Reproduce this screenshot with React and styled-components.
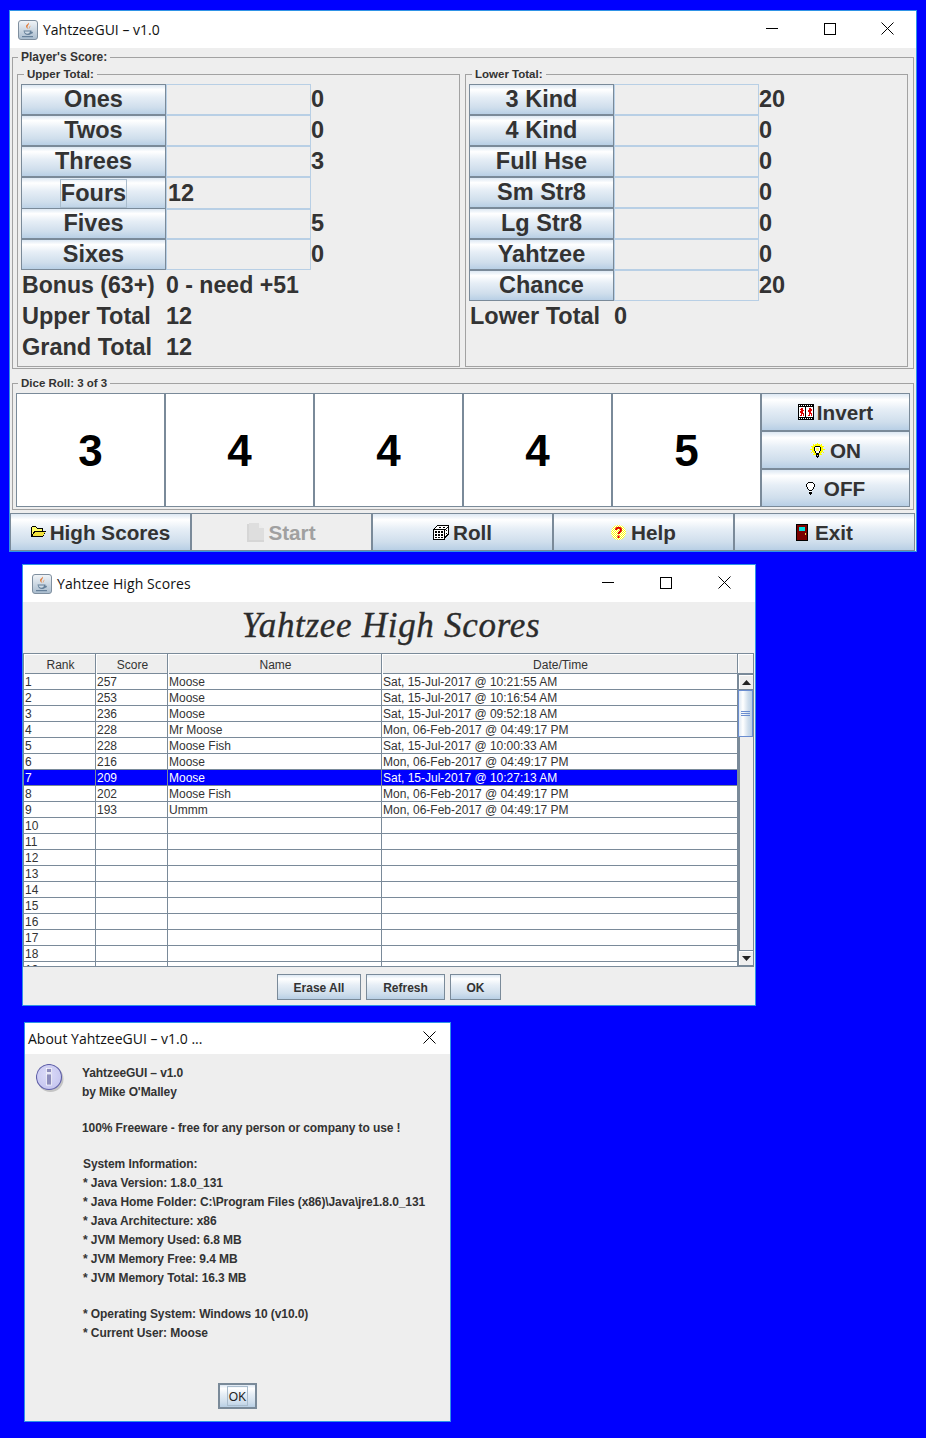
import React from "react";
import styled, { createGlobalStyle } from "styled-components";

const Global = createGlobalStyle`
  html, body { margin: 0; padding: 0; background: #0000ff; }
  body { width: 926px; height: 1438px; overflow: hidden; font-family: "Liberation Sans", Arial, sans-serif; color: #333; }
  #root { position: relative; width: 926px; height: 1438px; }
  * { box-sizing: border-box; }
`;

const metal = "linear-gradient(180deg,#dde8f3 0%,#ffffff 16%,#e6eef6 42%,#cfdeec 78%,#b8cfe5 100%)";
const line = "#7a8a99";

/* ---------- window chrome ---------- */
const Win = styled.section`
  position: absolute;
  left: ${p => p.$x}px; top: ${p => p.$y}px; width: ${p => p.$w}px; height: ${p => p.$h}px;
  border: 1px solid #2f93e6;
  background: #eeeeee;
  display: flex; flex-direction: column;
`;
const TitleBar = styled.header`
  height: ${p => p.$h || 37}px; flex: none; background: #fff;
  display: flex; align-items: center; padding-left: ${p => p.$pad}px; padding-right: ${p => p.$padR || 0}px;
  font-family: "Open Sans", "Noto Sans", sans-serif; color: #111;
`;
const TitleText = styled.span`
  font-size: ${p => p.$size}px; margin-left: ${p => p.$gap || 0}px; margin-bottom: ${p => p.$lift || 0}px; flex: 1; white-space: nowrap;
  letter-spacing: ${p => p.$ls || 0}px;
`;
const Ctl = styled.span`
  width: ${p => p.$w || 58}px; height: 100%; padding-bottom: 2px; display: flex; align-items: center; justify-content: center;
`;
const IconSvg = styled.svg`
  flex: none; display: block;
`;

const JavaIcon = () => (
  <IconSvg width="20" height="20" viewBox="0 0 20 20">
    <defs><linearGradient id="jg" x1="0" y1="0" x2="0" y2="1"><stop offset="0" stopColor="#f2f5f8"/><stop offset="1" stopColor="#a8bbcd"/></linearGradient></defs>
    <rect x=".5" y=".5" width="19" height="19" rx="2.5" fill="url(#jg)" stroke="#7f8f9f"/>
    <path d="M10.5 2.5c1.5 2-1.8 3-.9 5.2.3.7.9 1 1.2 1.3-2.6-.8-3.4-2.6-2.2-3.9 1-1.1 2-1.5 1.9-2.6z" fill="#e2712a"/>
    <path d="M12.5 5.5c.3 1.200-1.400 1.700-.8 3.200-1.500-1.300.3-2.200.8-3.200z" fill="#e98a46"/>
    <path d="M5 10.500h8.500c0 .5 0 .8-.2 1.300h1c1 0 1 2-1.500 2.200-.6.700-1.300 1-2.800 1-2.600 0-4-1.500-4.500-4.500z" fill="#66809a"/>
    <path d="M6.500 11.500h5.500c-.4 1.500-1.200 2.200-2.800 2.200-1.400 0-2.200-.8-2.700-2.200z" fill="#cfdbe6"/>
    <rect x="4" y="16" width="11" height="1.200" fill="#66809a"/>
  </IconSvg>
);
const MinIcon = () => <IconSvg width="12" height="13" viewBox="0 0 12 13"><path d="M0 6.500h12" stroke="#000"/></IconSvg>;
const MaxIcon = () => <IconSvg width="12" height="12" viewBox="0 0 12 12"><rect x=".5" y=".5" width="11" height="11" fill="none" stroke="#000"/></IconSvg>;
const CloseIcon = () => <IconSvg width="13" height="13" viewBox="0 0 13 13"><path d="M.5.5l12 12M12.500.5l-12 12" stroke="#000" strokeWidth="1"/></IconSvg>;

const FilmIcon = () => (
  <IconSvg width="16" height="16" viewBox="0 0 16 16" shapeRendering="crispEdges">
    <rect width="16" height="16" fill="#000"/>
    <rect y="3" width="16" height="10" fill="#fff"/>
    <path d="M1 1h1v1H1zM3 1h1v1H3zM5 1h1v1H5zM7 1h1v1H7zM9 1h1v1H9zM11 1h1v1h-1zM13 1h1v1h-1zM1 14h1v1H1zM3 14h1v1H3zM5 14h1v1H5zM7 14h1v1H7zM9 14h1v1H9zM11 14h1v1h-1zM13 14h1v1h-1z" fill="#fff"/>
    <rect x="0" y="3" width="1" height="10" fill="#000"/>
    <rect x="7" y="3" width="1" height="10" fill="#000"/>
    <rect x="15" y="3" width="1" height="10" fill="#000"/>
    <path d="M3 4h2v2h1v1H5v2h1v3H5V10H4v2H2v-1h1V9H2V7h1V6H2V5h1z" fill="#e00000"/>
    <path d="M11 4h2v1h1v2h-1v2h1v3h-1v-2h-1v2h-2v-1h1V8h-1V6h1z" fill="#e00000"/>
  </IconSvg>
);
const BulbOn = () => (
  <IconSvg width="15" height="15" viewBox="0 0 15 15" shapeRendering="crispEdges">
    <path d="M7 0h1v2H7zM3 1h1v1H3zM11 1h1v1h-1zM0 6h2v1H0zM13 6h2v1h-2zM1 3h1v1H1zM13 3h1v1h-1zM1 9h1v1H1zM13 9h1v1h-1zM3 11h1v1H3zM11 11h1v1h-1z" fill="#ffff00"/>
    <path d="M5 1h5v1h2v1h1v6h-1v1h-1v2H4v-2H3V9H2V3h1V2h2z" fill="#ffff00"/>
    <path d="M5 3h5v1h1v4h-1v2H9v1H6v-1H5V8H4V4h1z" fill="#000"/>
    <path d="M5 4h5v4H9v2H6V8H5z" fill="#fff"/>
    <path d="M6 5h3v3H6z" fill="#ffff66"/>
    <path d="M6 11h3v3H8v1H7v-1H6z" fill="#000"/><path d="M7 12h1v1H7z" fill="#ccc"/>
  </IconSvg>
);
const BulbOff = () => (
  <IconSvg width="9" height="13" viewBox="0 0 9 13" shapeRendering="crispEdges">
    <path d="M2 0h5v1h1v1h1v3H8v2H7v1H6v4H5v1H4v-1H3V8H2V7H1V5H0V2h1V1h1z" fill="#000"/>
    <path d="M2 1h5v1h1v3H7v2H6v1H3V7H2V5H1V2h1z" fill="#fff"/>
    <path d="M3 9h3v1H3z" fill="#fff"/>
  </IconSvg>
);
const FolderIcon = () => (
  <IconSvg width="15" height="12" viewBox="0 0 15 12" shapeRendering="crispEdges">
    <path d="M1 0h4v1h1v1h6v3h3v1h-1v2h-1v2h-1v1H0V1h1z" fill="#000"/>
    <path d="M1 1h4v1h1v1h5v2H3v1H2v2H1z" fill="#ffff66"/>
    <path d="M4 6h10v1h-1v2h-1v1H2V8h1V7h1z" fill="#f2e23c"/>
  </IconSvg>
);
const DocIcon = () => (
  <IconSvg width="17" height="19" viewBox="0 0 17 19" shapeRendering="crispEdges">
    <path d="M0 1h12v1h2v2h2v2h1v13H0z" fill="#d6d6d6"/>
    <path d="M2 0h10v5h5v12H2z" fill="#dedede"/>
    <path d="M12 1h1v1h1v1h1v1h1v1h-4z" fill="#ececec"/>
  </IconSvg>
);
const DiceIcon = () => (
  <IconSvg width="16" height="15" viewBox="0 0 16 15" shapeRendering="crispEdges">
    <path d="M4 0h12v10h-1v1h-1v1h-1v1h-1v2H0V4h1V3h1V2h1V1h1z" fill="#000"/>
    <path d="M4 1h11v1h-1v1h-1v1H2V3h1V2h1zM1 5h10v9H1z" fill="#fff"/>
    <path d="M12 5h1V4h1V3h1v6h-1v1h-1v1h-1z" fill="#fff"/>
    <path d="M2 6h2v2H2zM5 6h2v2H5zM8 6h2v2H8zM2 9h2v2H2zM5 9h2v2H5zM8 9h2v2H8zM2 12h2v1H2zM5 12h2v1H5zM8 12h2v1H8zM6 2h2v1H6zM10 2h2v1h-2z" fill="#000"/>
    <path d="M13 5h1v1h-1zM13 8h1v1h-1z" fill="#000"/>
  </IconSvg>
);
const HelpIcon = () => (
  <IconSvg width="15" height="15" viewBox="0 0 15 15">
    <defs><pattern id="dith" width="2" height="2" patternUnits="userSpaceOnUse"><rect width="2" height="2" fill="#ffffff"/><rect width="1" height="1" fill="#ffff00"/><rect x="1" y="1" width="1" height="1" fill="#ffff00"/></pattern></defs>
    <circle cx="7.500" cy="7.500" r="7.500" fill="url(#dith)"/>
    <path d="M5 5c0-3 5-3 5 0 0 2-2.500 2-2.500 4" fill="none" stroke="#e00000" strokeWidth="2"/>
    <rect x="6.500" y="10.500" width="2" height="2.500" fill="#e00000"/>
  </IconSvg>
);
const DoorIcon = () => (
  <IconSvg width="12" height="17" viewBox="0 0 12 17" shapeRendering="crispEdges">
    <rect width="12" height="17" fill="#000"/>
    <rect x="1" y="1" width="10" height="15" fill="#7a0000"/>
    <rect x="3" y="3" width="6" height="4" fill="#00e0e0"/>
    <rect x="9" y="9" width="1" height="2" fill="#e8d44a"/>
  </IconSvg>
);
const InfoIcon = () => (
  <IconSvg width="29" height="29" viewBox="0 0 29 29">
    <defs>
      <radialGradient id="ig" cx=".45" cy=".4" r=".7"><stop offset="0" stopColor="#dcdcf8"/><stop offset="1" stopColor="#c2c2ee"/></radialGradient>
    </defs>
    <circle cx="14.500" cy="15" r="13" fill="#9a9a9a" opacity=".5"/>
    <circle cx="13" cy="13" r="12.500" fill="url(#ig)" stroke="#6060a8" strokeWidth="1.100"/>
    <rect x="10.500" y="4.500" width="5" height="4" fill="#8e8ebc" stroke="#fff" strokeWidth=".7"/>
    <rect x="10.500" y="10" width="5" height="11" fill="#8e8ebc" stroke="#fff" strokeWidth=".7"/>
  </IconSvg>
);
const ArrowUp = () => <IconSvg width="9" height="5" viewBox="0 0 9 5"><path d="M4.500 0L9 5H0z" fill="#222"/></IconSvg>;
const ArrowDown = () => <IconSvg width="9" height="5" viewBox="0 0 9 5"><path d="M0 0h9L4.500 5z" fill="#222"/></IconSvg>;

/* ---------- main window ---------- */
const Groups = styled.div`
  padding: 2px 2px 0 2px; display: flex; flex-direction: column; gap: 7px;
`;
const Group = styled.fieldset`
  margin: 0; min-width: 0; width: ${p => p.$w}px; height: ${p => p.$h}px;
  padding: ${p => p.$pad};
  border: 1px solid #a2a2a2;
`;
const Legend = styled.legend`
  padding: 0 3px; margin-left: ${p => p.$ml}px; font-weight: 700; font-size: ${p => p.$size || 12}px; line-height: 14px; color: #333; white-space: nowrap;
`;
const Columns = styled.div`
  display: flex; gap: 5px; margin-top: 3px;
`;
const ScoreRow = styled.div`
  display: grid; grid-template-columns: 145px 145px auto; height: 31px; font-size: 23.5px; font-weight: 700; color: #333;
`;
const ScoreBtn = styled.div`
  border: 1px solid ${line}; background: ${metal};
  display: flex; align-items: center; justify-content: center; line-height: 1;
`;
const Focused = styled.span`
  height: 29px; line-height: 28px; padding: 0 1px; outline: ${p => p.$active ? "1px solid #a9bccd" : "none"}; outline-offset: -1px;
`;
const ScoreCell = styled.div`
  border: 1px solid #b8cfe5; padding-left: 1px; line-height: 31px;
`;
const ScoreVal = styled.div`
  line-height: 31px;
`;
const TotalRow = styled.div`
  display: grid; grid-template-columns: 144px auto; height: 31px; line-height: 31px; font-size: ${p => p.$size || 23.5}px; font-weight: 700; color: #333; white-space: nowrap; padding-left: 1px;
`;
const DiceGrid = styled.div`
  display: grid; grid-template-columns: repeat(6, 149px); height: 114px;
`;
const Die = styled.div`
  border: 1px solid ${line}; background: #fff; color: #000; font-weight: 700; font-size: 44px; padding-top: 2px;
  display: flex; align-items: center; justify-content: center;
`;
const SideStack = styled.div`
  display: grid; grid-template-rows: repeat(3, 38px);
`;
const ActionBtn = styled.div`
  border: 1px solid ${line}; background: ${p => p.$disabled ? "#eeeeee" : metal};
  color: ${p => p.$disabled ? "#a0a0a0" : "#333"}; font-weight: 700; font-size: 20.7px;
  display: flex; align-items: center; justify-content: center; gap: ${p => p.$gap ?? 4}px; white-space: nowrap;
`;
const ActionLabel = styled.span`
  margin-top: 2px;
`;
const BottomBar = styled.div`
  display: grid; grid-template-columns: repeat(5, 181px); height: 38px; margin-top: 3px;
`;

/* ---------- high scores ---------- */
const Heading = styled.h1`
  margin: 0; height: 51px; flex: none; display: flex; align-items: center; justify-content: center; padding: 0 0 3px 4px;
  font-family: "Liberation Serif", serif; font-style: italic; font-weight: 400; font-size: 35px; letter-spacing: .7px; -webkit-text-stroke: .35px #2b2b2b; color: #2b2b2b;
`;
const TableArea = styled.div`
  height: 314px; flex: none; display: flex; margin-right: 1px; border-top: 1px solid ${line};
`;
const TableClip = styled.div`
  width: 715px; height: 100%; overflow: hidden; flex: none; border-left: 1px solid ${line}; border-bottom: 1px solid ${line};
`;
const HeadRow = styled.div`
  display: grid; grid-template-columns: 72px 72px 214px 356px; height: 20px; border-bottom: 1px solid ${line}; font-size: 12px; color: #333;
`;
const HeadCell = styled.div`
  border-right: 1px solid ${line}; text-align: center; line-height: 22px; padding-left: 2px; box-shadow: inset 1px 1px #fff;
`;
const DataRow = styled.div`
  display: grid; grid-template-columns: 72px 72px 214px 356px; height: 16px; border-bottom: 1px solid ${line}; font-size: 12px; line-height: 17px;
  background: ${p => p.$sel ? "#0000ff" : "#fff"}; color: ${p => p.$sel ? "#fff" : "#333"};
`;
const DataCell = styled.div`
  border-right: 1px solid ${line}; padding-left: 1px; white-space: nowrap; overflow: hidden;
`;
const ScrollBar = styled.div`
  flex: 1; display: flex; flex-direction: column; border-right: 1px solid ${line}; border-bottom: 1px solid ${line};
`;
const ScrollCorner = styled.div`
  height: 20px; flex: none; border-bottom: 1px solid ${line}; box-shadow: inset 1px 1px #fff;
`;
const ScrollBtn = styled.div`
  height: 16px; flex: none; display: flex; align-items: center; justify-content: center;
  border: 1px solid ${line}; border-right: 0; box-shadow: inset 1px 1px #fff;
`;
const Thumb = styled.div`
  height: 47px; flex: none; border: 1px solid #6a8dd0; background: linear-gradient(90deg,#dde8f3,#fff 30%,#cfdeec 70%,#b8cfe5);
  display: flex; flex-direction: column; align-items: center; justify-content: center; gap: 1px;
`;
const Grip = styled.i`
  display: block; width: 9px; height: 1px; background: #6a8dd0;
`;
const Track = styled.div`
  flex: 1; border-left: 2px solid ${line};
`;
const ButtonRow = styled.div`
  display: flex; justify-content: center; gap: 5px; padding-top: 7px;
`;
const DlgBtn = styled.div`
  width: ${p => p.$w}px; height: 26px; padding-top: 2px; border: 1px solid ${line}; background: ${metal};
  font-size: 12px; font-weight: 700; color: #333; display: flex; align-items: center; justify-content: center;
`;

/* ---------- about ---------- */
const AboutBody = styled.div`
  flex: 1; display: flex; flex-direction: column; padding: 10px 0 12px 11px;
`;
const AboutMain = styled.div`
  display: flex; gap: 17px; flex: 1;
`;
const AboutIconWrap = styled.div`
  width: 29px; flex: none;
`;
const AboutText = styled.div`
  font-size: 12px; letter-spacing: -.09px; font-weight: 700; color: #333;
`;
const AboutLine = styled.div`
  height: 19px; line-height: 19px; white-space: nowrap; padding-left: ${p => p.$in || 0}px;
`;
const AboutBlank = styled.div`
  height: 17px;
`;
const DefaultBtn = styled.div`
  align-self: center; margin-left: -11px; width: 39px; height: 26px; border: 2px solid ${line}; background: ${metal};
  display: flex; align-items: center; justify-content: center; font-size: 12px; color: #222;
`;
const DefaultFocus = styled.span`
  width: 19px; height: 18px; padding-top: 2px; outline: 1px solid #a9bccd; display: flex; align-items: center; justify-content: center;
`;

const upper = [["Ones", "", "0"], ["Twos", "", "0"], ["Threes", "", "3"], ["Fours", "12", ""], ["Fives", "", "5"], ["Sixes", "", "0"]];
const lower = [["3 Kind", "", "20"], ["4 Kind", "", "0"], ["Full Hse", "", "0"], ["Sm Str8", "", "0"], ["Lg Str8", "", "0"], ["Yahtzee", "", "0"], ["Chance", "", "20"]];
const scores = [
  ["1", "257", "Moose", "Sat, 15-Jul-2017 @ 10:21:55 AM"],
  ["2", "253", "Moose", "Sat, 15-Jul-2017 @ 10:16:54 AM"],
  ["3", "236", "Moose", "Sat, 15-Jul-2017 @ 09:52:18 AM"],
  ["4", "228", "Mr Moose", "Mon, 06-Feb-2017 @ 04:49:17 PM"],
  ["5", "228", "Moose Fish", "Sat, 15-Jul-2017 @ 10:00:33 AM"],
  ["6", "216", "Moose", "Mon, 06-Feb-2017 @ 04:49:17 PM"],
  ["7", "209", "Moose", "Sat, 15-Jul-2017 @ 10:27:13 AM"],
  ["8", "202", "Moose Fish", "Mon, 06-Feb-2017 @ 04:49:17 PM"],
  ["9", "193", "Ummm", "Mon, 06-Feb-2017 @ 04:49:17 PM"],
  ...Array.from({ length: 10 }, (_, i) => [String(i + 10), "", "", ""]),
];
const aboutLines = [
  ["YahtzeeGUI – v1.0"], ["by Mike O'Malley"], null,
  ["100% Freeware - free for any person or company to use !"], null,
  ["System Information:", 1], ["* Java Version: 1.8.0_131", 1], ["* Java Home Folder: C:\\Program Files (x86)\\Java\\jre1.8.0_131", 1],
  ["* Java Architecture: x86", 1], ["* JVM Memory Used: 6.8 MB", 1], ["* JVM Memory Free: 9.4 MB", 1], ["* JVM Memory Total: 16.3 MB", 1], null,
  ["* Operating System: Windows 10 (v10.0)", 1], ["* Current User: Moose", 1],
];

const Controls = ({ lastW }) => (
  <>
    <Ctl><MinIcon /></Ctl>
    <Ctl><MaxIcon /></Ctl>
    <Ctl $w={lastW}><CloseIcon /></Ctl>
  </>
);
const ScoreList = ({ rows, focus }) => rows.map(([label, inside, val]) => (
  <ScoreRow key={label}>
    <ScoreBtn><Focused $active={label === focus}>{label}</Focused></ScoreBtn>
    <ScoreCell>{inside}</ScoreCell>
    <ScoreVal>{val}</ScoreVal>
  </ScoreRow>
));

export default function App() {
  return (
    <>
      <Global />
      <Win $x={9} $y={10} $w={908} $h={542}>
        <TitleBar $pad={8}>
          <JavaIcon />
          <TitleText $size={14} $gap={5} $lift={1}>YahtzeeGUI – v1.0</TitleText>
          <Controls lastW={57} />
        </TitleBar>
        <Groups>
          <Group $w={902} $h={319} $pad="0 3px 0 4px">
            <Legend $ml={1}>Player's Score:</Legend>
            <Columns>
              <Group $w={443} $h={300} $pad="3px 3px 0 3px">
                <Legend $ml={3} $size={11.5}>Upper Total:</Legend>
                <ScoreList rows={upper} focus="Fours" />
                <TotalRow $size={23.1}><span>Bonus (63+)</span><span>0 - need +51</span></TotalRow>
                <TotalRow><span>Upper Total</span><span>12</span></TotalRow>
                <TotalRow><span>Grand Total</span><span>12</span></TotalRow>
              </Group>
              <Group $w={443} $h={300} $pad="3px 3px 0 3px">
                <Legend $ml={3} $size={11.5}>Lower Total:</Legend>
                <ScoreList rows={lower} />
                <TotalRow><span>Lower Total</span><span>0</span></TotalRow>
              </Group>
            </Columns>
          </Group>
          <Group $w={902} $h={134} $pad="3px 3px 0 3px">
            <Legend $ml={2} $size={11.5}>Dice Roll: 3 of 3</Legend>
            <DiceGrid>
              {[3, 4, 4, 4, 5].map((d, i) => <Die key={i}>{d}</Die>)}
              <SideStack>
                <ActionBtn $gap={3}><FilmIcon /><ActionLabel>Invert</ActionLabel></ActionBtn>
                <ActionBtn $gap={5}><BulbOn /><ActionLabel>ON</ActionLabel></ActionBtn>
                <ActionBtn $gap={9}><BulbOff /><ActionLabel>OFF</ActionLabel></ActionBtn>
              </SideStack>
            </DiceGrid>
          </Group>
        </Groups>
        <BottomBar>
          <ActionBtn $gap={4}><FolderIcon /><ActionLabel>High Scores</ActionLabel></ActionBtn>
          <ActionBtn $disabled><DocIcon /><ActionLabel>Start</ActionLabel></ActionBtn>
          <ActionBtn><DiceIcon /><ActionLabel>Roll</ActionLabel></ActionBtn>
          <ActionBtn $gap={5}><HelpIcon /><ActionLabel>Help</ActionLabel></ActionBtn>
          <ActionBtn $gap={7}><DoorIcon /><ActionLabel>Exit</ActionLabel></ActionBtn>
        </BottomBar>
      </Win>

      <Win $x={22} $y={564} $w={734} $h={442}>
        <TitleBar $pad={9} $padR={2}>
          <JavaIcon />
          <TitleText $size={14} $gap={5} $ls={0.1}>Yahtzee High Scores</TitleText>
          <Controls />
        </TitleBar>
        <Heading>Yahtzee High Scores</Heading>
        <TableArea>
          <TableClip>
            <HeadRow>
              {["Rank", "Score", "Name", "Date/Time"].map(h => <HeadCell key={h}>{h}</HeadCell>)}
            </HeadRow>
            {scores.map((r, i) => (
              <DataRow key={r[0]} $sel={i === 6}>
                {r.map((c, j) => <DataCell key={j}>{c}</DataCell>)}
              </DataRow>
            ))}
          </TableClip>
          <ScrollBar>
            <ScrollCorner />
            <ScrollBtn><ArrowUp /></ScrollBtn>
            <Thumb><Grip /><Grip /><Grip /></Thumb>
            <Track />
            <ScrollBtn><ArrowDown /></ScrollBtn>
          </ScrollBar>
        </TableArea>
        <ButtonRow>
          <DlgBtn $w={84}>Erase All</DlgBtn>
          <DlgBtn $w={79}>Refresh</DlgBtn>
          <DlgBtn $w={51}>OK</DlgBtn>
        </ButtonRow>
      </Win>

      <Win $x={24} $y={1022} $w={427} $h={400}>
        <TitleBar $h={31} $pad={3}>
          <TitleText $size={14} $lift={1}>About YahtzeeGUI – v1.0 ...</TitleText>
          <Ctl $w={42}><CloseIcon /></Ctl>
        </TitleBar>
        <AboutBody>
          <AboutMain>
            <AboutIconWrap><InfoIcon /></AboutIconWrap>
            <AboutText>
              {aboutLines.map((l, i) => l
                ? <AboutLine key={i} $in={l[1]}>{l[0]}</AboutLine>
                : <AboutBlank key={i} />)}
            </AboutText>
          </AboutMain>
          <DefaultBtn><DefaultFocus>OK</DefaultFocus></DefaultBtn>
        </AboutBody>
      </Win>
    </>
  );
}
